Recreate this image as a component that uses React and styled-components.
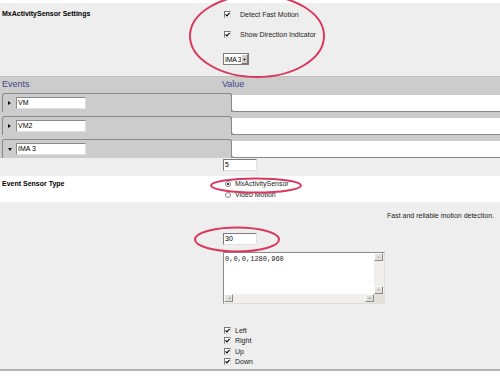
import React from 'react';
import styled, { createGlobalStyle } from 'styled-components';

const GlobalStyle = createGlobalStyle`
	body {
		margin: 0;
		background: #fff;
		font-family: "Liberation Sans", Arial, sans-serif;
		font-size: 7px;
		color: #000;
	}
`;

const COLOR = {
	page: '#eeeeee',
	band: '#cccccc',
	edge: '#888888',
	header: '#44448a',
	ring: '#d9385f',
};

const events = [
	{ name: 'VM', open: false },
	{ name: 'VM2', open: false },
	{ name: 'IMA 3', open: true },
];

const directions = ['Left', 'Right', 'Up', 'Down'];

//checkbox / radio

const Check = ({ label, gap }) => (
	<CheckRow $gap={gap}>
		<CheckBox>
			<svg width="5" height="5" viewBox="0 0 5 5">
				<path d="M0.5 2.3 L2 3.8 L4.6 0.8" stroke="#000" strokeWidth="1.2" fill="none" />
			</svg>
		</CheckBox>
		<span>{label}</span>
	</CheckRow>
);

const Radio = ({ label, checked }) => (
	<RadioRow>
		<RadioDot $checked={checked} />
		<span>{label}</span>
	</RadioRow>
);

const EventRow = ({ event }) => (
	<Row>
		<Tab>
			<Arrow $open={event.open} />
			<NameInput>{event.name}</NameInput>
		</Tab>
		<ValueCell />
	</Row>
);

const App = () => {
	return (
		<Page>
			<GlobalStyle />
			<TopStrip />

			<Settings>
				<Label>MxActivitySensor Settings</Label>
				<Column>
					<Check label="Detect Fast Motion" gap={9} />
					<Check label="Show Direction Indicator" gap={9} />
					<Select>
						<SelectText>IMA 3</SelectText>
						<SelectButton>▼</SelectButton>
					</Select>
				</Column>
			</Settings>

			<EventsHeader>
				<span>Events</span>
				<span>Value</span>
			</EventsHeader>
			<EventsList>
				{events.map((ev) => (
					<EventRow key={ev.name} event={ev} />
				))}
			</EventsList>

			<CountRow>
				<TextBox>5</TextBox>
			</CountRow>

			<SensorType>
				<Label>Event Sensor Type</Label>
				<Column>
					<Radio label="MxActivitySensor" checked />
					<Radio label="Video Motion" />
				</Column>
			</SensorType>

			<Detection>
				<Description>Fast and reliable motion detection.</Description>
				<Column>
					<TextBox>30</TextBox>
					<Area>
						<AreaText>0,0,0,1280,960</AreaText>
						<VScroll>
							<ScrollBtn>▲</ScrollBtn>
							<ScrollBtn>▼</ScrollBtn>
						</VScroll>
						<HScroll>
							<ScrollBtn>◀</ScrollBtn>
							<ScrollBtn>▶</ScrollBtn>
						</HScroll>
						<Corner />
					</Area>
					<DirList>
						{directions.map((d) => (
							<Check key={d} label={d} gap={4} />
						))}
					</DirList>
				</Column>
			</Detection>

			<Rings viewBox="0 0 500 381" width="500" height="381">
				<ellipse cx="257" cy="36" rx="67" ry="41" />
				<ellipse cx="256" cy="185.5" rx="45" ry="7" />
				<ellipse cx="237" cy="239.5" rx="42" ry="12" />
			</Rings>
		</Page>
	);
};

export default App;

const Page = styled.div`
	position: relative;
	width: 500px;
	height: 381px;
	overflow: hidden;
	background: #fff;
`;

const TopStrip = styled.div`
	height: 3px;
	background: #fff;
`;

const Settings = styled.section`
	display: grid;
	grid-template-columns: 223px 1fr;
	height: 73px;
	padding-top: 5px;
	box-sizing: border-box;
	background: ${COLOR.page};
`;

const Label = styled.div`
	padding-left: 2px;
	font-weight: bold;
	line-height: 12px;
`;

const Column = styled.div`
	display: flex;
	flex-direction: column;
	align-items: flex-start;
`;

const CheckRow = styled.div`
	display: flex;
	align-items: center;
	height: ${(p) => (p.$gap > 5 ? '12px' : '10.5px')};
	margin-bottom: ${(p) => (p.$gap > 5 ? '8px' : '0')};
	padding-left: 1px;
	gap: ${(p) => p.$gap}px;
	color: #222;
`;

const CheckBox = styled.span`
	display: flex;
	align-items: center;
	justify-content: center;
	width: 7px;
	height: 7px;
	box-sizing: border-box;
	border: 1px solid #7a7a7a;
	border-right-color: #ddd;
	border-bottom-color: #ddd;
	background: #fff;
`;

const Select = styled.div`
	display: flex;
	align-items: center;
	width: 26px;
	height: 12px;
	margin-top: 5px;
	box-sizing: border-box;
	border: 1px solid #7a7a7a;
	background: #fff;
	overflow: hidden;
`;

const SelectText = styled.span`
	flex: 1;
	padding-left: 1px;
	white-space: nowrap;
	letter-spacing: -0.3px;
	overflow: hidden;
`;

const SelectButton = styled.span`
	display: flex;
	align-items: center;
	justify-content: center;
	flex: 0 0 7px;
	height: 10px;
	box-sizing: border-box;
	background: #d4d0c8;
	border: 1px solid #fff;
	border-right-color: #777;
	border-bottom-color: #777;
	font-size: 4px;
`;

const EventsHeader = styled.div`
	display: grid;
	grid-template-columns: 220px 1fr;
	height: 16px;
	padding-left: 2px;
	box-sizing: border-box;
	border-top: 1px solid #c0c0c0;
	background: ${COLOR.band};
	color: ${COLOR.header};
	font-size: 9px;
	line-height: 14px;
`;

const EventsList = styled.div`
	display: flex;
	flex-direction: column;
	gap: 4px;
	padding: 1px 0 0 2px;
	background: ${COLOR.band};
`;

const Row = styled.div`
	display: flex;
	height: 19px;
`;

const Tab = styled.div`
	display: flex;
	align-items: center;
	gap: 4px;
	width: 230px;
	padding-left: 4px;
	box-sizing: border-box;
	border: 1px solid ${COLOR.edge};
	border-bottom: none;
	border-radius: 3px 3px 0 0;
	background: ${COLOR.band};
`;

const Arrow = styled.span`
	width: 0;
	height: 0;
	margin: 0 ${(p) => (p.$open ? '0' : '1px')} 0 1px;
	border-style: solid;
	border-color: transparent;
	${(p) =>
		p.$open
			? `border-width: 3px 2.5px 0 2.5px; border-top-color: #111;`
			: `border-width: 2.5px 0 2.5px 3px; border-left-color: #111;`}
`;

const NameInput = styled.div`
	width: 70px;
	height: 12px;
	box-sizing: border-box;
	border: 1px solid #8a8a8a;
	border-right-color: #e0e0e0;
	border-bottom-color: #e0e0e0;
	background: #fff;
	padding-left: 1px;
	line-height: 10px;
`;

const ValueCell = styled.div`
	flex: 1;
	margin-left: -1px;
	margin-top: 2px;
	border-left: 1px solid ${COLOR.edge};
	border-bottom: 1px solid ${COLOR.edge};
	border-bottom-left-radius: 3px;
	background: #fff;
`;

const CountRow = styled.div`
	padding: 1px 0 5px 223px;
	background: ${COLOR.page};
`;

const TextBox = styled.div`
	width: 34px;
	height: 12px;
	box-sizing: border-box;
	border: 1px solid #7a7a7a;
	border-right-color: #e2e2e2;
	border-bottom-color: #e2e2e2;
	background: #fff;
	padding-left: 1px;
	line-height: 10px;
`;

const SensorType = styled.section`
	display: grid;
	grid-template-columns: 223px 1fr;
	height: 26px;
	padding-top: 2px;
	box-sizing: border-box;
	background: #fff;
	${Label} {
		line-height: 11px;
	}
`;

const RadioRow = styled.div`
	display: flex;
	align-items: center;
	gap: 4px;
	height: 11px;
	padding-left: 2px;
	color: #222;
`;

const RadioDot = styled.span`
	position: relative;
	width: 6px;
	height: 6px;
	box-sizing: border-box;
	border: 1px solid #888;
	border-radius: 50%;
	background: #fff;
	&::after {
		content: '';
		display: ${(p) => (p.$checked ? 'block' : 'none')};
		position: absolute;
		left: 1px;
		top: 1px;
		width: 2px;
		height: 2px;
		border-radius: 50%;
		background: #000;
	}
`;

const Detection = styled.section`
	display: grid;
	grid-template-columns: 223px 1fr;
	align-content: start;
	padding-top: 8px;
	padding-bottom: 2px;
	box-sizing: border-box;
	height: 169px;
	background: ${COLOR.page};
	border-bottom: 2px solid #b4b4b4;
	& > ${Column} {
		grid-column: 2;
	}
	${Column} > ${TextBox} {
		margin-top: 11px;
	}
`;

const Description = styled.div`
	grid-column: 1 / -1;
	text-align: right;
	padding-right: 6px;
	line-height: 12px;
	color: #222;
`;

const Area = styled.div`
	display: grid;
	grid-template-columns: 1fr 10px;
	grid-template-rows: 1fr 9px;
	width: 162px;
	height: 52px;
	margin-top: 7px;
	box-sizing: border-box;
	border: 1px solid #8a8a8a;
	border-right-color: #ddd;
	border-bottom-color: #ddd;
	background: #fff;
`;

const AreaText = styled.div`
	padding: 2px 0 0 1px;
	font-family: "Liberation Mono", "Courier New", monospace;
	font-size: 7px;
	color: #222;
`;

const VScroll = styled.div`
	display: flex;
	flex-direction: column;
	justify-content: space-between;
	background: #f0efeb;
`;

const HScroll = styled.div`
	display: flex;
	justify-content: space-between;
	background: #f0efeb;
`;

const ScrollBtn = styled.span`
	display: flex;
	align-items: center;
	justify-content: center;
	width: 9px;
	height: 8px;
	box-sizing: border-box;
	border: 1px solid #fff;
	border-right-color: #8a8a8a;
	border-bottom-color: #8a8a8a;
	background: #e3e1da;
	color: #a09c94;
	font-size: 3px;
`;

const Corner = styled.div`
	background: #e3e1da;
`;

const DirList = styled.div`
	display: flex;
	flex-direction: column;
	margin-top: 21px;
`;

const Rings = styled.svg`
	position: absolute;
	left: 0;
	top: 0;
	pointer-events: none;
	ellipse {
		fill: none;
		stroke: ${COLOR.ring};
		stroke-width: 2;
	}
`;
